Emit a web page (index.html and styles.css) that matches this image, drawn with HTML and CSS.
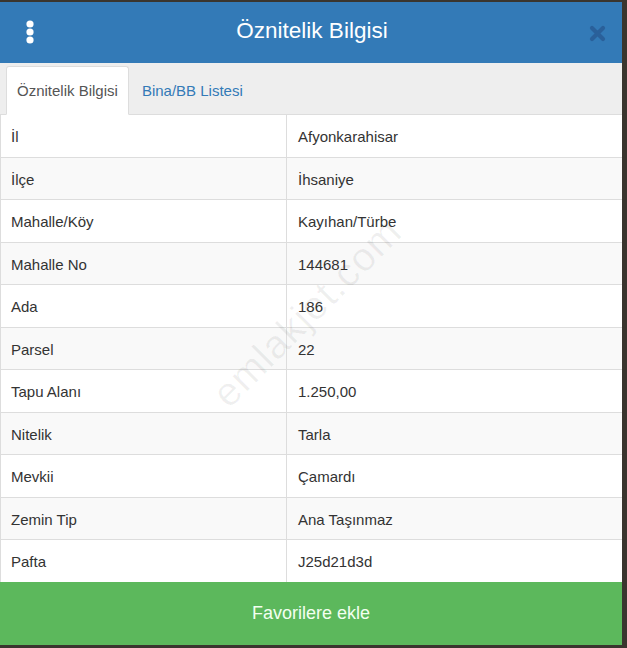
FILE: index.html
```html
<!DOCTYPE html>
<html lang="tr">
<head>
<meta charset="utf-8">
<title>Öznitelik Bilgisi</title>
<link rel="stylesheet" href="styles.css">
</head>
<body>
<div class="modal">
  <header class="head">
    <span class="menu" aria-label="menü">
      <svg width="10" height="24" viewBox="0 0 10 24"><circle cx="5" cy="4" r="3.6" fill="#fff"/><circle cx="5" cy="12" r="3.6" fill="#fff"/><circle cx="5" cy="20" r="3.6" fill="#fff"/></svg>
    </span>
    <h1 class="title">Öznitelik Bilgisi</h1>
    <span class="close" aria-label="kapat">
      <svg width="17" height="17" viewBox="0 0 17 17"><path d="M3 3L14 14M14 3L3 14" stroke="#2a609a" stroke-width="4.2" stroke-linecap="round"/></svg>
    </span>
  </header>
  <nav class="tabs">
    <span class="tab active">Öznitelik Bilgisi</span>
    <span class="tab">Bina/BB Listesi</span>
  </nav>
  <div class="body">
    <div class="table">
      <div class="row"><div class="cell">İl</div><div class="cell">Afyonkarahisar</div></div>
      <div class="row"><div class="cell">İlçe</div><div class="cell">İhsaniye</div></div>
      <div class="row"><div class="cell">Mahalle/Köy</div><div class="cell">Kayıhan/Türbe</div></div>
      <div class="row"><div class="cell">Mahalle No</div><div class="cell">144681</div></div>
      <div class="row"><div class="cell">Ada</div><div class="cell">186</div></div>
      <div class="row"><div class="cell">Parsel</div><div class="cell">22</div></div>
      <div class="row"><div class="cell">Tapu Alanı</div><div class="cell">1.250,00</div></div>
      <div class="row"><div class="cell">Nitelik</div><div class="cell">Tarla</div></div>
      <div class="row"><div class="cell">Mevkii</div><div class="cell">Çamardı</div></div>
      <div class="row"><div class="cell">Zemin Tip</div><div class="cell">Ana Taşınmaz</div></div>
      <div class="row"><div class="cell">Pafta</div><div class="cell">J25d21d3d</div></div>
    </div>
    <div class="watermark">emlakjet.com</div>
  </div>
  <footer class="foot">Favorilere ekle</footer>
</div>
</body>
</html>
```

FILE: styles.css
```css
html, body {
  margin: 0;
  padding: 0;
}
body {
  background: #3a352e;
  font-family: "Liberation Sans", Arial, sans-serif;
  height: 648px;
  overflow: hidden;
}
.modal {
  width: 622px;
  margin-top: 2px;
  background: #fff;
  display: flex;
  flex-direction: column;
}
.head {
  height: 61px;
  background: #337ab7;
  display: flex;
  align-items: center;
  justify-content: space-between;
  padding: 0 16px 0 25px;
  box-sizing: border-box;
}
.menu {
  display: flex;
  width: 10px;
  margin-top: -1px;
}
.title {
  margin: -4px 0 0 0;
  font-size: 22.5px;
  font-weight: normal;
  color: #fff;
}
.close {
  display: flex;
  margin-top: 1px;
}
.tabs {
  background: #eeeeee;
  height: 52px;
  box-sizing: border-box;
  padding: 4px 0 0 6px;
  display: flex;
  align-items: flex-end;
  border-bottom: 1px solid #dddddd;
}
.tab {
  font-size: 15px;
  line-height: 20px;
  padding: 14px 10px 13px 10px;
  color: #337ab7;
  margin-bottom: -1px;
  border: 1px solid transparent;
  border-radius: 3px 3px 0 0;
  margin-right: 2px;
}
.tab.active {
  background: #fff;
  color: #555;
  border-color: #dddddd;
  border-bottom-color: #fff;
}
.body {
  position: relative;
  overflow: hidden;
}
.table {
  border-left: 1px solid #dddddd;
}
.row {
  display: grid;
  grid-template-columns: 285px 1fr;
  border-top: 1px solid #dddddd;
  font-size: 15px;
  color: #333;
}
.row:first-child {
  border-top: none;
}
.row:nth-child(even) {
  background: #f9f9f9;
}
.cell {
  padding: 11px 10px 9px 10px;
  line-height: 21.5px;
}
.cell + .cell {
  border-left: 1px solid #dddddd;
  padding-left: 11px;
}
.watermark {
  position: absolute;
  left: 152px;
  top: 175px;
  width: 310px;
  text-align: center;
  font-size: 40px;
  color: rgba(0, 0, 0, 0.06);
  transform: rotate(-45deg);
  pointer-events: none;
  letter-spacing: 1px;
}
.foot {
  height: 63px;
  background: #5cb85c;
  color: #f2fff0;
  font-size: 18px;
  display: flex;
  align-items: center;
  justify-content: center;
}
```
